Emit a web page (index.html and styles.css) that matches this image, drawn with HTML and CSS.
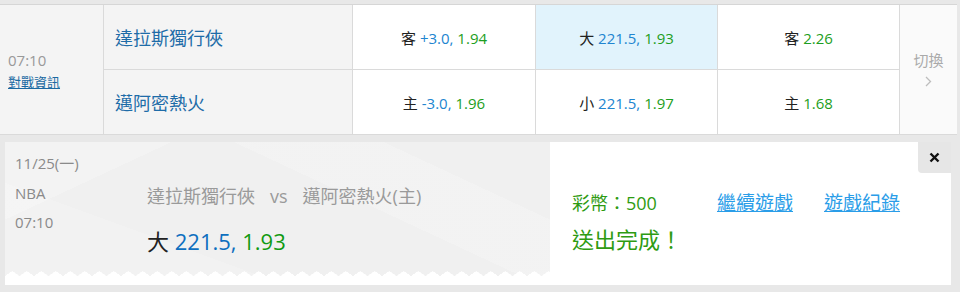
FILE: index.html
```html
<!DOCTYPE html>
<html lang="zh-Hant">
<head>
    <meta charset="UTF-8">
    <title>投注單</title>
    <link rel="stylesheet" href="styles.css">
</head>
<body>
<div class="match">
    <div class="cell time-cell">
        <span class="kick">07:10</span>
        <a class="info-link" href="#">對戰資訊</a>
    </div>
    <div class="cell team">達拉斯獨行俠</div>
    <div class="cell odd"><span><span class="side">客</span> <span class="line">+3.0,</span> <span class="price">1.94</span></span></div>
    <div class="cell odd picked"><span><span class="side">大</span> <span class="line">221.5,</span> <span class="price">1.93</span></span></div>
    <div class="cell odd"><span><span class="side">客</span> <span class="price">2.26</span></span></div>
    <div class="cell switch">
        <span>切換</span>
        <svg class="chev" width="7" height="11" viewBox="0 0 7 11"><path d="M1 1l4.5 4.5L1 10" fill="none" stroke="#bdbdbd" stroke-width="1.3"/></svg>
    </div>
    <div class="cell team">邁阿密熱火</div>
    <div class="cell odd"><span><span class="side">主</span> <span class="line">-3.0,</span> <span class="price">1.96</span></span></div>
    <div class="cell odd"><span><span class="side">小</span> <span class="line">221.5,</span> <span class="price">1.97</span></span></div>
    <div class="cell odd"><span><span class="side">主</span> <span class="price">1.68</span></span></div>
</div>

<div class="result">
    <div class="ticket">
        <div class="ticket-body">
            <div class="meta">
                <p>11/25(一)</p>
                <p>NBA</p>
                <p>07:10</p>
            </div>
            <div class="bet">
                <p class="teams">達拉斯獨行俠<span class="vs">vs</span>邁阿密熱火(主)</p>
                <p class="pick"><span class="side">大</span> <span class="line">221.5,</span> <span class="price">1.93</span></p>
            </div>
        </div>
        <div class="zigzag"></div>
    </div>
    <div class="done">
        <div class="done-row">
            <span class="stake">彩幣：500</span>
            <a class="act" href="#">繼續遊戲</a>
            <a class="act" href="#">遊戲紀錄</a>
        </div>
        <p class="sent">送出完成！</p>
    </div>
    <a class="close" href="#">
        <svg width="11" height="11" viewBox="0 0 11 11"><path d="M1.5 1.5l8 8M9.5 1.5l-8 8" stroke="#111" stroke-width="2.4"/></svg>
    </a>
</div>
</body>
</html>
```

FILE: styles.css
```css
html {
    box-sizing: border-box;
    font-family: "Open Sans", "Noto Sans CJK TC", sans-serif;
}

*,
*:before,
*:after {
    box-sizing: inherit;
}

body {
    margin: 0;
    padding-top: 4px;
    background: #e8e8e8;
    height: 292px;
    overflow: hidden;
}

p {
    margin: 0;
}

/* 賽事列 */
.match {
    width: 957px;
    display: grid;
    grid-template-columns: 104px 249px 183px 182px 182px 57px;
    grid-template-rows: 65px 65px;
    border-top: 1px solid #d6d6d6;
    background: #fff;
}

.cell {
    border-right: 1px solid #dadada;
    border-bottom: 1px solid #dadada;
    display: flex;
    align-items: center;
}

.time-cell {
    grid-row: span 2;
    background: #f4f4f4;
    flex-direction: column;
    align-items: flex-start;
    justify-content: center;
    padding-left: 8px;
}

.kick {
    font-size: 15px;
    line-height: 24px;
    color: #999;
}

.info-link {
    font-size: 13px;
    line-height: 20px;
    color: #1b6aa2;
}

.team {
    background: #f4f4f4;
    padding-left: 11px;
    font-size: 18px;
    color: #1e6ca8;
}

.odd {
    justify-content: center;
    font-size: 15px;
    color: #222;
}

.odd.picked {
    background: #e1f3fc;
}

.line {
    color: #2185d0;
}

.price {
    color: #1d9e22;
}

.switch {
    grid-column: 6;
    grid-row: 1 / span 2;
    border-right: 0;
    background: #fafafa;
    flex-direction: column;
    justify-content: center;
    padding-bottom: 3px;
    font-size: 15px;
    color: #aaa;
    line-height: 20px;
}

.chev {
    margin-top: 6px;
}

/* 下注結果 */
.result {
    position: relative;
    display: flex;
    margin: 7px 9px 0 5px;
    height: 143px;
    background: #fff;
}

.ticket {
    width: 545px;
    height: 134px;
    display: flex;
    flex-direction: column;
    border-bottom-right-radius: 4px;
    background:
        linear-gradient(155deg, rgba(255, 255, 255, 0.22) 0 20%, transparent 20%),
        linear-gradient(25deg, transparent 62%, rgba(255, 255, 255, 0.18) 62% 80%, transparent 80%),
        linear-gradient(200deg, transparent 72%, rgba(255, 255, 255, 0.15) 72%),
        #f0f0f0;
}

.ticket-body {
    display: flex;
    flex: 1;
}

.meta {
    width: 142px;
    padding: 7px 0 0 10px;
    font-size: 15px;
    line-height: 29.5px;
    color: #8a8a8a;
}

.bet {
    padding-top: 39px;
}

.teams {
    font-size: 18px;
    line-height: 30px;
    color: #9a9a9a;
}

.vs {
    padding: 0 15px;
}

.pick {
    margin-top: 15px;
    font-size: 22px;
    line-height: 30px;
    color: #222;
}

.pick .line {
    color: #0d6fbf;
}

.pick .price {
    color: #109a12;
}

.zigzag {
    height: 5px;
    background: conic-gradient(from 125deg at 50% 0, #fff 110deg, transparent 0) 0 0 / 14.5px 5px repeat-x;
}

.done {
    padding: 46px 0 0 22px;
}

.done-row {
    display: flex;
    align-items: baseline;
    font-size: 18px;
    line-height: 30px;
}

.stake {
    width: 145px;
    color: #2e9b12;
}

.act {
    font-size: 19px;
    color: #2a9de8;
    margin-right: 31px;
}

.sent {
    margin-top: 6px;
    font-size: 22px;
    line-height: 30px;
    color: #2e9b12;
}

.close {
    position: absolute;
    top: 0;
    right: 0;
    width: 33px;
    height: 31px;
    display: flex;
    align-items: center;
    justify-content: center;
    background: #e6e6e6;
    border-bottom-left-radius: 4px;
}
```
